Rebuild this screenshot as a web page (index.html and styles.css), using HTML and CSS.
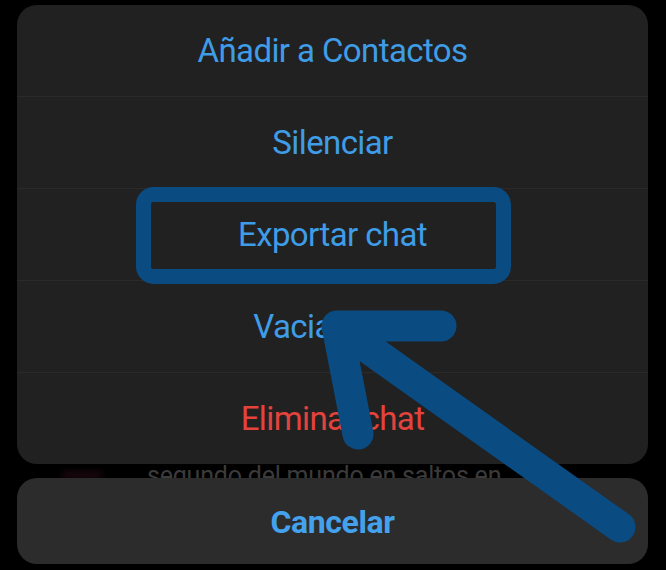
FILE: index.html
```html
<!DOCTYPE html>
<html lang="es">
<head>
    <meta charset="UTF-8">
    <meta name="viewport" content="width=device-width, initial-scale=1.0">
    <title>Opciones del chat</title>
    <link rel="stylesheet" href="styles.css">
</head>
<body>
    <div class="screen">
        <!-- chat list peeking out behind the action sheet -->
        <div class="behind">
            <span class="avatar"></span>
            <span class="preview">segundo del mundo en saltos en</span>
        </div>

        <div class="sheet">
            <div class="actions">
                <button class="action">Añadir a Contactos</button>
                <button class="action">Silenciar</button>
                <button class="action">Exportar chat</button>
                <button class="action">Vaciar chat</button>
                <button class="action danger">Eliminar chat</button>
            </div>
            <button class="cancel">Cancelar</button>
        </div>

        <!-- tutorial highlight drawn over the screenshot -->
        <svg class="markup" width="666" height="570" viewBox="0 0 666 570">
            <rect x="143.5" y="194.5" width="360" height="82" rx="10" fill="none" stroke="#0a4b82" stroke-width="15"/>
            <path d="M441 326 L337 326 L358 434 M337 326 L620 527" fill="none" stroke="#0a4b82" stroke-width="31" stroke-linecap="round" stroke-linejoin="round"/>
        </svg>
    </div>
</body>
</html>
```

FILE: styles.css
```css
html, body {
    margin: 0;
    background: #000;
}
body {
    font-family: Roboto, "Liberation Sans", sans-serif;
}
.screen {
    position: relative;
    width: 666px;
    height: 570px;
    overflow: hidden;
}
.behind {
    position: absolute;
    top: 455px;
    left: 0;
    right: 0;
    height: 40px;
    display: flex;
    align-items: center;
    z-index: 0;
}
.avatar {
    width: 40px;
    height: 6px;
    margin-left: 62px;
    border-radius: 3px;
    background: #1f0910;
    filter: blur(3px);
}
.preview {
    margin-left: 45px;
    color: #3b3b3b;
    font-size: 25px;
    letter-spacing: -0.2px;
}
.sheet {
    position: relative;
    z-index: 1;
    padding: 5px 18px 0 17px;
    display: flex;
    flex-direction: column;
    gap: 14px;
}
.actions {
    background: #212121;
    border-radius: 20px;
    overflow: hidden;
    display: flex;
    flex-direction: column;
}
.action, .cancel {
    display: block;
    width: 100%;
    box-sizing: border-box;
    border: none;
    background: transparent;
    color: #3f9ce6;
    font-family: inherit;
    font-size: 33px;
    letter-spacing: -0.6px;
    padding: 0;
    cursor: pointer;
}
.action {
    height: 92px;
    border-top: 1px solid #2a2a2a;
}
.action:first-child {
    height: 91px;
    border-top: none;
}
.danger {
    color: #e4433d;
}
.cancel {
    height: 86px;
    background: #2c2c2c;
    border-radius: 20px;
    font-weight: 700;
    font-size: 32px;
    letter-spacing: -0.4px;
    color: #44a2ec;
    padding-top: 2px;
}
.markup {
    position: absolute;
    top: 0;
    left: 0;
    z-index: 2;
    pointer-events: none;
}
```
